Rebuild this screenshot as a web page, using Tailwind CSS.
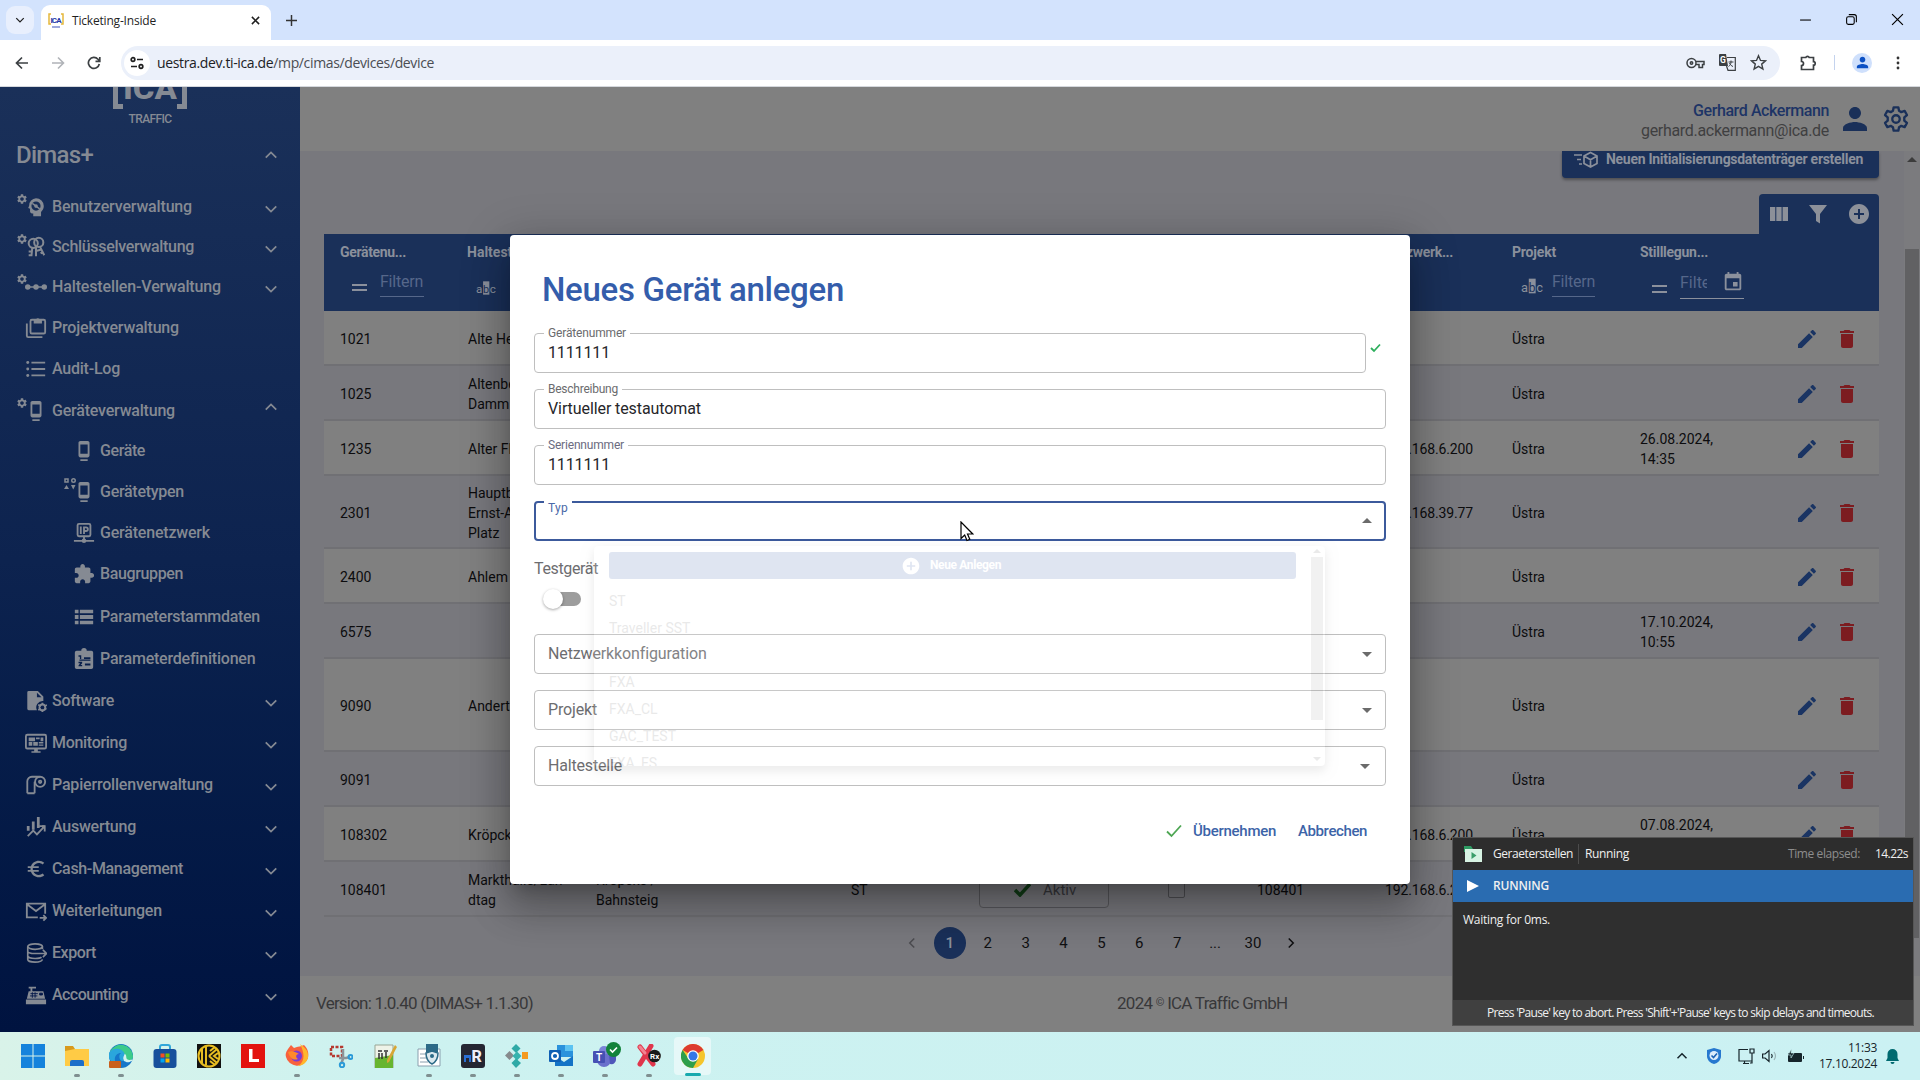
<!DOCTYPE html>
<html lang="de">
<head>
<meta charset="utf-8">
<title>Ticketing-Inside</title>
<script src="https://cdn.jsdelivr.net/npm/@tailwindcss/browser@4"></script>
</head>
<body class="relative h-[1080px] w-[1920px] overflow-hidden bg-[#808080] font-[Roboto,sans-serif]">
<svg class="hidden" xmlns="http://www.w3.org/2000/svg">
  <symbol id="gear" viewBox="0 0 24 24"><path d="M19.14 12.94c.04-.3.06-.61.06-.94 0-.32-.02-.64-.07-.94l2.03-1.58c.18-.14.23-.41.12-.61l-1.92-3.32c-.12-.22-.37-.29-.59-.22l-2.39.96c-.5-.38-1.03-.7-1.62-.94l-.36-2.54c-.04-.24-.24-.41-.48-.41h-3.84c-.24 0-.43.17-.47.41l-.36 2.54c-.59.24-1.13.57-1.62.94l-2.39-.96c-.22-.08-.47 0-.59.22L2.74 8.87c-.12.21-.08.47.12.61l2.03 1.58c-.05.3-.09.63-.09.94s.02.64.07.94l-2.03 1.58c-.18.14-.23.41-.12.61l1.92 3.32c.12.22.37.29.59.22l2.39-.96c.5.38 1.03.7 1.62.94l.36 2.54c.05.24.24.41.48.41h3.84c.24 0 .44-.17.47-.41l.36-2.54c.59-.24 1.13-.56 1.62-.94l2.39.96c.22.08.47 0 .59-.22l1.92-3.32c.12-.22.07-.47-.12-.61l-2.01-1.58zM12 15.6c-1.98 0-3.6-1.62-3.6-3.6s1.62-3.6 3.6-3.6 3.6 1.62 3.6 3.6-1.62 3.6-3.6 3.6z"/></symbol>
  <symbol id="edit" viewBox="0 0 24 24"><path d="M3 17.25V21h3.75L17.81 9.94l-3.75-3.75L3 17.25zM20.71 7.04c.39-.39.39-1.02 0-1.41l-2.34-2.34c-.39-.39-1.02-.39-1.41 0l-1.83 1.83 3.75 3.75 1.83-1.83z"/></symbol>
  <symbol id="delete" viewBox="0 0 24 24"><path d="M6 19c0 1.1.9 2 2 2h8c1.1 0 2-.9 2-2V7H6v12zM19 4h-3.5l-1-1h-5l-1 1H5v2h14V4z"/></symbol>
  <symbol id="extension" viewBox="0 0 24 24"><path d="M20.5 11H19V7c0-1.1-.9-2-2-2h-4V3.5C13 2.12 11.88 1 10.5 1S8 2.12 8 3.5V5H4c-1.1 0-1.99.9-1.99 2v3.8H3.5c1.49 0 2.7 1.21 2.7 2.7s-1.21 2.7-2.7 2.7H2V20c0 1.1.9 2 2 2h3.8v-1.5c0-1.49 1.21-2.7 2.7-2.7 1.49 0 2.7 1.21 2.7 2.7V22H17c1.1 0 2-.9 2-2v-4h1.5c1.38 0 2.5-1.12 2.5-2.5S21.88 11 20.5 11z"/></symbol>
  <symbol id="person" viewBox="0 0 24 24"><path d="M12 12c2.21 0 4-1.79 4-4s-1.79-4-4-4-4 1.79-4 4 1.79 4 4 4zm0 2c-2.67 0-8 1.34-8 4v2h16v-2c0-2.66-5.33-4-8-4z"/></symbol>
  <symbol id="add" viewBox="0 0 24 24"><path d="M12 2C6.48 2 2 6.48 2 12s4.48 10 10 10 10-4.48 10-10S17.52 2 12 2zm5 11h-4v4h-2v-4H7v-2h4V7h2v4h4v2z"/></symbol>
  <symbol id="euro" viewBox="0 0 24 24"><path d="M15 18.5c-2.51 0-4.68-1.42-5.76-3.5H15v-2H8.58c-.05-.33-.08-.66-.08-1s.03-.67.08-1H15V9H9.24C10.32 6.92 12.5 5.5 15 5.5c1.61 0 3.09.59 4.23 1.57L21 5.3C19.41 3.87 17.3 3 15 3c-3.92 0-7.24 2.51-8.48 6H3v2h3.06c-.04.33-.06.66-.06 1s.02.67.06 1H3v2h3.52c1.24 3.49 4.56 6 8.48 6 2.31 0 4.41-.87 6-2.3l-1.78-1.77c-1.13.98-2.6 1.57-4.22 1.57z"/></symbol>
  <symbol id="event" viewBox="0 0 24 24"><path d="M17 12h-5v5h5v-5zM16 1v2H8V1H6v2H5c-1.11 0-1.99.9-1.99 2L3 19c0 1.1.89 2 2 2h14c1.1 0 2-.9 2-2V5c0-1.1-.9-2-2-2h-1V1h-2zm3 18H5V8h14v11z"/></symbol>
  <symbol id="dock" viewBox="0 0 24 24"><path d="M8 23h8v-2H8v2zm8-21.99L8 1c-1.1 0-2 .9-2 2v14c0 1.1.9 2 2 2h8c1.1 0 2-.9 2-2V3c0-1.1-.9-1.99-2-1.99zM16 15H8V5h8v10z"/></symbol>
  <symbol id="user-head" viewBox="0 0 24 24"><path fill-rule="evenodd" d="M12 2.500a8.500 8.500 0 0 1 8.500 8.500c0 3-1.500 5-3 6.500V22H9v-3H7.500a2 2 0 0 1-2-2v-3L3.500 13l1-2.500A8 8 0 0 1 12 2.500zm0 3.500a5 5 0 1 0 0 10 5 5 0 0 0 0-10z"/><circle cx="12" cy="11" r="2"/><path d="M8 8l8 6" stroke="currentColor" stroke-width="1.500"/></symbol>
  <symbol id="keys" viewBox="0 0 24 24"><g fill="none" stroke="currentColor" stroke-width="2.200"><circle cx="9" cy="8" r="5"/><circle cx="15" cy="7" r="5"/><path d="M8 12l-1 10M4 17h4M4 21h4M12 11v11M16 11l5 10M13 16l4-1M20 17l-3 2"/></g></symbol>
  <symbol id="stops" viewBox="0 0 24 24"><circle cx="3" cy="12" r="3"/><circle cx="12" cy="12" r="3"/><circle cx="21" cy="12" r="3"/><path d="M3 11.200h18v1.600H3z"/></symbol>
  <symbol id="project" viewBox="0 0 24 24"><g fill="none" stroke="currentColor" stroke-width="2"><rect x="6" y="3" width="16" height="15" rx="1.500"/><path d="M2 7v13.500a1.500 1.500 0 0 0 1.500 1.500H19"/></g><path d="M9.500 3h2.200a2.400 2.400 0 0 1 4.600 0h2.200v4h-9z"/></symbol>
  <symbol id="list" viewBox="0 0 24 24"><circle cx="3" cy="5" r="1.600"/><circle cx="3" cy="12" r="1.600"/><circle cx="3" cy="19" r="1.600"/><path d="M7 4h15v2H7zM7 11h15v2H7zM7 18h15v2H7z"/></symbol>
  <symbol id="types" viewBox="0 0 24 24"><g fill="none" stroke="currentColor" stroke-width="3"><path d="M2 2h6v6H2z"/><circle cx="19" cy="5" r="3.500"/></g><path d="M5 14l5 8H0zM14 14h9l-4.500 9z"/></symbol>
  <symbol id="ip" viewBox="0 0 24 24"><g fill="none" stroke="currentColor" stroke-width="2"><rect x="5" y="2" width="14" height="13.500" rx="1.500"/><path d="M8.500 5v8M12 13V5.800h2.200a1.900 1.900 0 0 1 0 4H12M12 15v5M1 20.500h22"/></g><circle cx="12" cy="20.500" r="2.500"/></symbol>
  <symbol id="params" viewBox="0 0 24 24"><path d="M2 4h4v4H2zM7.500 4H22v4H7.500zM2 9.800h4v4.400H2zM7.500 9.800H22v4.400H7.500zM2 16h4v4H2zM7.500 16H22v4H7.500z"/></symbol>
  <symbol id="definitions" viewBox="0 0 24 24"><path fill-rule="evenodd" d="M4 3h5a3 3 0 0 1 6 0h5q2 0 2 2v16q0 2-2 2H4q-2 0-2-2V5q0-2 2-2zm2 5v1.500h1.500V13H9V8zm6 2v2h7v-2zM6 15v1.500h1.800L6 19v1h4v-1.500H8.300L10 16.500V15zm7 2v2h6v-2zM7 12.500V14h12v-1.500z"/></symbol>
  <symbol id="software" viewBox="0 0 24 24"><path d="M4 1h10l6 6v5a7 7 0 0 0-7 10H4a1.500 1.500 0 0 1-1.500-1.500v-18A1.500 1.500 0 0 1 4 1z"/><path d="M13 3v5h5z" fill="#0b2150"/><circle cx="19" cy="19" r="3.200" fill="none" stroke="currentColor" stroke-width="2"/><path d="M18 14h2v10h-2zM14 17l.8-1.600 9 4.800-.8 1.600zM14 21l9.500-5.500.8 1.500-9.500 5.500z"/><circle cx="19" cy="19" r="2" fill="#0a1f4d"/></symbol>
  <symbol id="monitoring" viewBox="0 0 24 24"><rect x="1" y="3" width="22" height="15" rx="1.500" fill="none" stroke="currentColor" stroke-width="2"/><path d="M4 6h7v4H4zM12 6h4v2h-4zM17 6h3v4h-3zM4 11h4v4H4zM9 11h5v4H9zM15 11h5v1.500h-5zM15 13.500h5V15h-5zM10 18h4v3h3v1.500H7V21h3z"/></symbol>
  <symbol id="paper" viewBox="0 0 24 24"><g fill="none" stroke="currentColor" stroke-width="2"><path d="M2.500 21V8a5 5 0 0 1 5-5H16M2.500 21h8M10.500 21V8.500"/><circle cx="16.500" cy="8.500" r="5.500"/><circle cx="16.500" cy="8.500" r="1.300"/></g></symbol>
  <symbol id="analytics" viewBox="0 0 24 24"><path d="M2 11h3v5H2zM7.500 6h3v9h-3zM13 1h3v12h-3zM18.500 10h3v3h-3z"/><path d="M3 22l6-6 4 4 8-8.500M15.500 11h6v6" fill="none" stroke="currentColor" stroke-width="2"/></symbol>
  <symbol id="forward" viewBox="0 0 24 24"><g fill="none" stroke="currentColor" stroke-width="2"><path d="M14 19H2V4h20v11M2.500 5L12 12l9.500-7M16 19.500h6.500M20 16.500l3 3-3 3"/></g></symbol>
  <symbol id="export" viewBox="0 0 24 24"><g fill="none" stroke="currentColor" stroke-width="1.800"><ellipse cx="11" cy="5" rx="8" ry="3"/><path d="M3 5v14c0 1.700 3.600 3 8 3 4 0 7.500-1 8-3M3 10c0 1.700 4 2.500 8 2.500h12M3 15c0 1.700 3.600 3 8 3 3 0 6-.5 7-1.500M19 5v3M19.500 8.500l4 4-4 4"/></g></symbol>
  <symbol id="register" viewBox="0 0 24 24"><path d="M1 17h22v5H1zM4 8h16l2 8H2zM6 4h2v4H6zM4 3h8v2H4z"/><path d="M6 10.500h8M5.500 13h8M8 9v6M11 9v6M16 10h3v2h-3z" stroke="#04184a" stroke-width="1" fill="#04184a"/></symbol>
  <symbol id="chev" viewBox="0 0 16 16"><path d="M2 5l6 6 6-6" fill="none" stroke="currentColor" stroke-width="2"/></symbol>
  <symbol id="abc" viewBox="0 0 24 24"><rect x="8.500" y="4" width="7.500" height="16" fill="currentColor"/><text x="0" y="18" font-size="14" font-family="Roboto" fill="currentColor">a</text><text x="8.500" y="18" font-size="13" font-family="Roboto" fill="#1a3059">b</text><text x="16.500" y="18" font-size="14" font-family="Roboto" fill="currentColor">c</text></symbol>
</svg>

<div class="flex h-full flex-col">
  <!-- Browser tab strip -->
  <header class="flex h-10 shrink-0 items-start bg-[#d3e3fd] font-['Open_Sans',sans-serif]">
    <div class="mt-[6px] ml-[6px] flex h-7 w-7 items-center justify-center rounded-[9px] bg-[#e8effd] text-[#1f1f1f]"><svg class="h-2.5 w-2.5"><use href="#chev"/></svg></div>
    <div class="mt-[5px] ml-[7px] flex h-[35px] w-[230px] items-center rounded-t-[9px] bg-white pr-[11px] pb-[4px] pl-[7px]">
      <svg class="h-4 w-4" viewBox="0 0 16 16"><path d="M3 1H1v10h2M13 1h2v10h-2" fill="none" stroke="#e5b83c" stroke-width="1.500"/><text x="2.500" y="9.500" font-size="8" font-weight="700" textLength="11" fill="#2638a8" font-family="Roboto">ICA</text><path d="M4 14h8" stroke="#7d8bd0" stroke-width="1.500"/></svg>
      <span class="ml-2 text-[12px] text-[#1f1f1f]" data-w="84">Ticketing-Inside</span>
      <svg class="ml-auto h-[9px] w-[9px]" viewBox="0 0 10 10"><path d="M1 1l8 8M9 1L1 9" stroke="#1f1f1f" stroke-width="1.700"/></svg>
    </div>
    <svg class="mt-[15px] ml-[15px] h-[11px] w-[11px]" viewBox="0 0 12 12"><path d="M6 0v12M0 6h12" stroke="#333" stroke-width="1.600"/></svg>
    <div class="mt-[13px] mr-[16px] ml-auto flex items-center gap-[33px] text-black">
      <svg class="h-[13px] w-[13px]" viewBox="0 0 12 12"><path d="M1 6.500h10" stroke="currentColor"/></svg>
      <svg class="h-[13px] w-[13px]" viewBox="0 0 12 12" fill="none" stroke="currentColor"><rect x="1.500" y="3.500" width="7" height="7" rx="1.500"/><path d="M3.500 1.500h5a2 2 0 0 1 2 2v5"/></svg>
      <svg class="h-[13px] w-[13px]" viewBox="0 0 12 12"><path d="M1 1l10 10M11 1L1 11" stroke="currentColor" stroke-width="1.100"/></svg>
    </div>
  </header>
  <!-- Address bar -->
  <div class="flex h-[47px] shrink-0 items-center border-b border-[#d5d8dd] bg-white pb-px font-['Open_Sans',sans-serif] text-[#3c4043]">
    <div class="flex w-[121px] items-center gap-[22px] pl-[15px]">
      <svg class="h-[14px] w-[14px]" viewBox="0 0 14 14" fill="none" stroke="currentColor" stroke-width="1.700"><path d="M13 7H1.500M7 1.500L1.500 7 7 12.500"/></svg>
      <svg class="h-[14px] w-[14px] text-[#b0b3b8]" viewBox="0 0 14 14" fill="none" stroke="currentColor" stroke-width="1.600"><path d="M1 7h11.500M7 1.500L12.500 7 7 12.500"/></svg>
      <svg class="h-[14px] w-[14px]" viewBox="0 0 14 14" fill="none" stroke="currentColor" stroke-width="1.700"><path d="M12.300 8A5.500 5.500 0 1 1 11 3.200L12.600 5M12.800 1v4.300H8.500"/></svg>
    </div>
    <div class="flex h-[34px] w-[1659px] items-center rounded-full bg-[#ebf0fa] pr-[13px] pl-1">
      <div class="-ml-px flex h-[26px] w-[26px] items-center justify-center rounded-full bg-white"><svg class="h-[14px] w-[14px]" viewBox="0 0 14 14" fill="none" stroke="#1f1f1f" stroke-width="1.700"><circle cx="3" cy="3.500" r="1.800"/><path d="M7 3.500h6M1 10.500h6"/><circle cx="11" cy="10.500" r="1.800"/></svg></div>
      <span class="ml-[7px] text-[14px] text-[#4a4d52]" data-w="277"><span class="text-[#202124]">uestra.dev.ti-ica.de</span>/mp/cimas/devices/device</span>
      <div class="ml-auto flex items-center gap-[14px]">
        <svg class="h-[12px] w-[19px]" viewBox="0 0 19 12" fill="none" stroke="currentColor" stroke-width="1.500"><circle cx="5.500" cy="6" r="4.500"/><circle cx="5.500" cy="6" r="1.200"/><path d="M10 4.500h8v3h-1.500v3H13v-3h-3"/></svg>
        <svg class="h-[17px] w-[17px]" viewBox="0 0 17 17"><path d="M1 0h6l2 12H1a1 1 0 0 1-1-1V1a1 1 0 0 1 1-1z" fill="currentColor"/><path d="M8 3.500h8.300v12.800H9L7.500 12" fill="none" stroke="currentColor" stroke-width="1.200"/><text x="1" y="9" font-size="8.500" font-weight="700" fill="#fff" font-family="Roboto">G</text><path d="M9.500 8h5M12 6.500V8c0 2-1 3.500-2.500 4.500M10.500 9c.5 1.500 2 3 3.500 3.500" stroke="currentColor" fill="none"/></svg>
        <svg class="h-[17px] w-[17px]" viewBox="0 0 17 17"><path d="M8.500 1.700l2 4.700 5 .4-3.800 3.300 1.200 5-4.400-2.700-4.400 2.700 1.200-5L1.500 6.800l5-.4z" fill="none" stroke="currentColor" stroke-width="1.400"/></svg>
      </div>
    </div>
    <svg class="ml-5 h-[17px] w-[17px]" viewBox="0 0 17 17" fill="none" stroke="currentColor" stroke-width="1.700"><path d="M1.500 3.500h4.300a1.800 1.800 0 0 1 3.400 0h4.300v4.200a1.700 1.700 0 0 1 0 3.400v4.400h-12v-4a2 2 0 0 0 0-4z"/></svg>
    <div class="ml-[17px] h-[15px] w-px bg-[#c4d3ee]"></div>
    <div class="ml-[17px] flex h-5 w-5 items-center justify-center rounded-full bg-[#cfe0fc] text-[#0b50c4]"><svg class="h-[17px] w-[17px] fill-current"><use href="#person"/></svg></div>
    <svg class="ml-[24px] h-[14px] w-[4px]" viewBox="0 0 4 14" fill="#333"><circle cx="2" cy="2" r="1.400"/><circle cx="2" cy="7" r="1.400"/><circle cx="2" cy="12" r="1.400"/></svg>
  </div>

  <main class="flex h-[945px] shrink-0">
    <!-- Navigation -->
    <aside class="flex w-[300px] shrink-0 flex-col overflow-hidden bg-linear-to-b from-[#1a3059] via-[#0d234f] to-[#001340] text-[#858a93]">
      <div class="flex h-[44px] shrink-0 flex-col items-center overflow-hidden">
        <svg class="h-[22px] w-[74px]" viewBox="0 0 74 22" fill="currentColor"><path d="M0 0h5v17h5v5H0zM74 0h-5v17h-5v5h10z"/><text x="10" y="12" font-family="Roboto" font-weight="800" font-size="32" textLength="54" lengthAdjust="spacingAndGlyphs">ICA</text></svg>
        <span class="mt-[3px] text-[12px] leading-[14px] font-medium" data-w="43">TRAFFIC</span>
      </div>
      <div class="flex h-12 shrink-0 items-center pr-[22px] pl-4"><span class="text-[24px] leading-none font-medium" data-w="77">Dimas+</span><svg class="ml-auto h-[14px] w-[14px] rotate-180"><use href="#chev"/></svg></div>
      <nav id="nav" class="mt-2 flex flex-col"></nav>
    </aside>

    <section class="flex grow flex-col">
      <div class="flex h-16 shrink-0 items-center justify-end bg-[#808080] pr-[10px]">
        <div class="flex flex-col items-end pt-1 text-[16px] leading-5"><span class="font-medium text-[#1d3466]" data-w="136">Gerhard Ackermann</span><span class="text-[#3f3f40]" data-w="188">gerhard.ackermann@ica.de</span></div>
        <svg class="ml-[8px] h-9 w-9 fill-[#1a3059]"><use href="#person"/></svg>
        <svg class="ml-[9px] h-7 w-7 text-[#1a3059]" viewBox="0 0 24 24" fill="none" stroke="currentColor" stroke-width="2" stroke-linejoin="round"><path d="M10 2h4l.6 3 1.900 1.100 2.900-1 2 3.500-2.300 2v2.800l2.300 2-2 3.500-2.900-1-1.900 1.100-.6 3h-4l-.6-3-1.900-1.100-2.900 1-2-3.500 2.300-2v-2.800l-2.300-2 2-3.500 2.900 1L9.400 5z"/><circle cx="12" cy="12" r="3.200"/></svg>
      </div>
      <div class="flex grow">
        <div class="flex w-[1604px] flex-col bg-[#78787d]">
          <div class="flex flex-col items-end pr-[25px]">
            <div class="flex h-[27px] w-[317px] items-start rounded-b-[4px] bg-[#1a3059] pl-3 text-[#8b909c] shadow-[0_2px_3px_rgba(0,0,0,0.35)]">
              <svg class="h-[18px] w-6" viewBox="0 0 24 18" fill="none" stroke="currentColor" stroke-width="1.700"><path d="M0 4h8M3 8.500h4M5 13h3M16.500 1.500l6.500 3.500v7.500l-6.500 3.500-6.500-3.500V5zM10 5l6.500 3.700L23 5M16.500 8.700v7"/></svg>
              <span class="ml-2 text-[14px] leading-[17px] font-bold" data-w="257">Neuen Initialisierungsdatenträger erstellen</span>
            </div>
            <div class="mt-4 flex h-10 w-[120px] items-center justify-between rounded-t-[4px] bg-[#1a3059] pr-[8px] pl-[10px] text-[#8c9099]">
              <svg class="h-4 w-5 fill-current" viewBox="0 0 20 16"><path d="M1 1h5.300v14H1zM7.300 1h5.300v14H7.300zM13.600 1H19v14h-5.400z"/></svg>
              <svg class="h-[19px] w-[18px] fill-current" viewBox="0 0 18 19"><path d="M0 0h18l-7 9v9.500l-4-2.500V9z"/></svg>
              <svg class="h-6 w-6 fill-current"><use href="#add"/></svg>
            </div>
          </div>
          <div class="relative ml-6 flex h-[77px] w-[1555px] shrink-0 bg-[#1a3059] pt-[9px] pl-4 text-[#8b909c]">
            <div class="flex w-[127px] shrink-0 flex-col items-start"><b class="text-[14px] leading-[18px]" data-w="66">Gerätenu...</b><div class="mt-[12px] flex items-end"><svg class="mb-[3px] ml-3 h-3 w-[15px]" viewBox="0 0 15 12"><path d="M0 3h15M0 8h15" stroke="currentColor" stroke-width="2"/></svg><span class="ml-[13px] w-[44px] border-b border-current pb-[5px] text-[16px] leading-[18px] text-[#56678a]"><span data-w="43">Filtern</span></span></div></div>
            <div class="flex w-[918px] shrink-0 flex-col items-start"><b class="text-[14px] leading-[18px]">Haltestelle</b><svg class="mt-[17px] ml-[9px] h-5 w-5"><use href="#abc"/></svg></div>
            <div class="flex w-[127px] shrink-0 flex-col items-start"><b class="w-[68px] text-[14px] leading-[18px]" data-w="68">Netzwerk...</b></div>
            <div class="flex w-[128px] shrink-0 flex-col items-start"><b class="text-[14px] leading-[18px]" data-w="44">Projekt</b><div class="mt-[12px] flex items-end"><svg class="ml-[9px] h-[22px] w-[22px]"><use href="#abc"/></svg><span class="ml-[9px] w-[43px] border-b border-current pb-[5px] text-[16px] leading-[18px] text-[#56678a]"><span data-w="43">Filtern</span></span></div></div>
            <div class="flex shrink-0 flex-col items-start"><b class="text-[14px] leading-[18px]" data-w="68">Stilllegun...</b><div class="mt-[9px] flex items-end"><svg class="mb-[3px] ml-3 h-3 w-[15px]" viewBox="0 0 15 12"><path d="M0 2h15M0 8h15" stroke="currentColor" stroke-width="2"/></svg><div class="ml-[13px] flex w-16 items-end justify-between border-b border-current pb-[4px]"><span class="w-[27px] overflow-hidden text-[16px] leading-[22px] text-[#56678a]">Filte</span><svg class="h-6 w-[22px] fill-current"><use href="#event"/></svg></div></div></div>
          </div>
          <div id="rows" class="ml-6 w-[1555px]"></div>
          <div class="flex h-[52px] items-center pl-[593px] text-[15px] text-[#101012]">
            <div class="grid grid-cols-[repeat(11,37.9px)] items-center text-center">
              <svg class="mx-auto h-3 w-3 rotate-90 text-[#4c4c50]"><use href="#chev"/></svg>
              <span class="mx-auto flex h-8 w-8 items-center justify-center rounded-full bg-[#1a3059] font-medium text-[#8b909c]">1</span>
              <span>2</span><span>3</span><span>4</span><span>5</span><span>6</span><span>7</span><span>...</span><span>30</span>
              <svg class="mx-auto h-3 w-3 -rotate-90"><use href="#chev"/></svg>
            </div>
          </div>
        </div>
        <div class="flex w-4 flex-col items-center bg-[#7b7b7e]">
          <div class="mt-[6px] h-0 w-0 border-x-[5px] border-b-[5px] border-x-transparent border-b-[#3c3c3c]"></div>
          <div class="mt-[87px] h-[689px] w-[14px] bg-[#616163]"></div>
        </div>
      </div>
      <footer class="flex h-14 shrink-0 items-center bg-[#808080] pl-4 text-[17px] text-[#38383a]"><span data-w="217">Version: 1.0.40 (DIMAS+ 1.1.30)</span><span class="ml-[584px]" data-w="169">2024 <span class="relative -top-[3px] text-[11px]">©</span> ICA Traffic GmbH</span></footer>
    </section>
  </main>

  <!-- Taskbar -->
  <div class="flex h-12 shrink-0 items-center bg-linear-to-r from-[#d9f3e9] via-[#cdf2f0] via-20% to-[#cbf1f3] font-['Open_Sans',sans-serif]">
    <div class="flex items-center pl-[11px]">
      <div class="flex h-12 w-11 items-center justify-center"><svg class="h-6 w-6" viewBox="0 0 24 24" fill="#1583dc"><path d="M0 0h11.500v11.500H0zM12.500 0H24v11.500H12.500zM0 12.500h11.500V24H0zM12.500 12.500H24V24H12.500z"/></svg></div>
      <div class="relative flex h-12 w-11 items-center justify-center"><svg class="h-6 w-6" viewBox="0 0 24 24"><path d="M0 2h8l2 3h13v16H0z" fill="#d89a1c"/><path d="M0 7l10-2h14v17H0z" fill="#ffcb45"/><path d="M5 22v-4q0-2 2-2h10q2 0 2 2v4z" fill="#1b6fc9"/></svg><i class="absolute bottom-[3px] h-[3px] w-[6px] rounded bg-[#7f8f90]"></i></div>
      <div class="relative flex h-12 w-11 items-center justify-center"><svg class="h-6 w-6" viewBox="0 0 24 24"><circle cx="12" cy="12" r="12" fill="#1676c9"/><path d="M1 8a12 12 0 0 1 23 4c0 4-3 6-7 5-3-1-1-3-1-5 0-4-8-6-15-4z" fill="#3ccb8a"/><path d="M0 9C4 2 16 4 16 12c0 2-2 3-1 5-5 1-6-6-3-8-5 0-8 5-5 11C0 18-1 12 0 9z" fill="#2aa6dc"/><path d="M16 11c-1 2-2 5 1 6 2 1 5 0 6-1-1 1-5 1-6-1s0-3-1-4z" fill="#d4f2ee" stroke="#d4f2ee" stroke-width="1.500"/><rect x="0" y="17" width="12" height="7" rx="1" fill="#c9601c"/></svg><i class="absolute bottom-[3px] h-[3px] w-[6px] rounded bg-[#7f8f90]"></i></div>
      <div class="flex h-12 w-11 items-center justify-center"><svg class="h-6 w-6" viewBox="0 0 24 24"><path d="M7 6V3q0-2 2-2h6q2 0 2 2v3" fill="none" stroke="#30a7d9" stroke-width="2"/><rect x="0.500" y="5" width="23" height="19" rx="3" fill="#17509c"/><path d="M7.500 9.500h4v4h-4z" fill="#f25022"/><path d="M12.500 9.500h4v4h-4z" fill="#7fba00"/><path d="M7.500 14.500h4v4h-4z" fill="#00a4ef"/><path d="M12.500 14.500h4v4h-4z" fill="#ffb900"/></svg></div>
      <div class="flex h-12 w-11 items-center justify-center"><svg class="h-6 w-6" viewBox="0 0 24 24"><rect width="24" height="24" fill="#111"/><g fill="none" stroke="#e7bd22" stroke-width="2"><circle cx="12" cy="12" r="10.500"/><path d="M5 5v14M9 3v18M12 12l8-7M12 12l8 7M13 7l5-4M13 17l5 4M21 9l-4 3 4 3"/></g></svg></div>
      <div class="flex h-12 w-11 items-center justify-center"><svg class="h-6 w-6" viewBox="0 0 24 24"><rect width="24" height="24" fill="#e3130f"/><path d="M8 5h3.500v10H18v3H8z" fill="#fff"/></svg></div>
      <div class="relative flex h-12 w-11 items-center justify-center"><svg class="h-6 w-6" viewBox="0 0 24 24"><path d="M3 5l3-4 3 3c6-2 9-2 10-3 4 4 5 8 4 13a11.500 11.500 0 0 1-22-1C0 9 2 7 3 5z" fill="#f8613d"/><path d="M15 0c4 3 9 6 8 14-2 6-7 8-10 8 8-5 6-14 2-22z" fill="#ffb72b"/><circle cx="11.500" cy="12" r="5.500" fill="#7a3bd3"/><path d="M3 8c4-2 8 0 11 2-3 0-4 3-1 5-5 2-8-1-10-7z" fill="#ff8a2a"/></svg><i class="absolute bottom-[3px] h-[3px] w-[6px] rounded bg-[#7f8f90]"></i></div>
      <div class="flex h-12 w-11 items-center justify-center"><svg class="h-6 w-6" viewBox="0 0 24 24" fill="none"><path d="M2 3h11v9H2z" stroke="#b6392f" stroke-width="2.500" stroke-dasharray="3 1.500"/><path d="M14 5v10l-2 5M10 14h7l4-1" stroke="#8c9398" stroke-width="2.500"/><circle cx="13" cy="21" r="2.200" stroke="#2b9bd8" stroke-width="2"/><circle cx="21.500" cy="13" r="2" stroke="#2b9bd8" stroke-width="2"/></svg></div>
      <div class="flex h-12 w-11 items-center justify-center"><svg class="h-6 w-6" viewBox="0 0 24 24"><path d="M2 1h18v23H2z" fill="#eef3e8" stroke="#98a695"/><path d="M2 14l18-3v13H2z" fill="#67b52f"/><path d="M5 7h4M11 7h4M6 9v6M9 9v6M13 8v6" stroke="#333" stroke-width="1.500"/><path d="M22 1l2 2-8 15-2 1v-3z" fill="#d8a636"/></svg></div>
      <div class="relative flex h-12 w-11 items-center justify-center"><svg class="h-6 w-6" viewBox="0 0 24 24"><path d="M1 5h22v17H1z" fill="#fff" stroke="#8a9fae"/><path d="M3 10h8M3 14h8M3 18h8" stroke="#8a9fae"/><path d="M9 0h12v8l-6 4-6-4z" fill="#2c6a87"/><path d="M9 9l6-2 6 2c0 6-2 9-6 11-4-2-6-5-6-11z" fill="#dce9ef" stroke="#2c6a87" stroke-width="1.500"/><circle cx="15" cy="12" r="2" fill="#2c6a87"/></svg><i class="absolute bottom-[3px] h-[3px] w-[6px] rounded bg-[#7f8f90]"></i></div>
      <div class="relative flex h-12 w-11 items-center justify-center"><svg class="h-6 w-6" viewBox="0 0 24 24"><rect width="24" height="24" rx="3" fill="#242632"/><path d="M3 11h7v7H8v-4H5v4H3z" fill="#2a6fd3"/><text x="10.500" y="18" font-size="16" font-weight="800" font-family="Roboto" fill="#f0eef8">R</text></svg><i class="absolute bottom-[3px] h-[3px] w-[6px] rounded bg-[#7f8f90]"></i></div>
      <div class="relative flex h-12 w-11 items-center justify-center"><svg class="h-6 w-6" viewBox="0 0 24 24"><path d="M11 0l4.500 4.500L11 9 6.500 4.500z" fill="#2fa9a6"/><path d="M4.500 7L9 11.500 4.500 16 0 11.500z" fill="#868a8c"/><path d="M12 7.500l4.500 4.500-4.500 4.500L7.500 12z" fill="#35b3ae"/><path d="M11 14.500l5 4.500-5 5-4.500-5z" fill="#2fa9a6"/><path d="M17 8h6v7h-6z" fill="#f39a20"/></svg><i class="absolute bottom-[3px] h-[3px] w-[6px] rounded bg-[#7f8f90]"></i></div>
      <div class="relative flex h-12 w-11 items-center justify-center"><svg class="h-6 w-6" viewBox="0 0 24 24"><path d="M8 1h16v12H8z" fill="#2a92dc"/><path d="M16 1h8v6h-8z" fill="#5cc3f2"/><path d="M6 12l9 6 9-6v10H6z" fill="#1473c6"/><rect x="0" y="6" width="12" height="12" rx="1" fill="#0f5fb4"/><circle cx="6" cy="12" r="3" fill="none" stroke="#fff" stroke-width="1.800"/></svg><i class="absolute bottom-[3px] h-[3px] w-[6px] rounded bg-[#7f8f90]"></i></div>
      <div class="relative flex h-12 w-11 items-center justify-center"><svg class="h-7 w-8" viewBox="0 0 32 28"><circle cx="15" cy="9" r="5" fill="#7b83d8"/><path d="M8 12h14v6a7 7 0 0 1-14 0z" fill="#6a70cc"/><path d="M20 13h7v5q-1 5-6 4z" fill="#4f57ba"/><rect x="4" y="9" width="12" height="12" rx="1" fill="#4650b4"/><text x="7" y="18.500" font-size="10" font-weight="700" font-family="Roboto" fill="#fff">T</text><circle cx="24.500" cy="7.500" r="7.500" fill="#12833a"/><path d="M21 7.500l2.500 2.500 4.500-4.500" fill="none" stroke="#fff" stroke-width="1.700"/></svg><i class="absolute bottom-[3px] h-[3px] w-[6px] rounded bg-[#7f8f90]"></i></div>
      <div class="relative flex h-12 w-11 items-center justify-center"><svg class="h-6 w-6" viewBox="0 0 24 24"><path d="M3 3l13 17M14 2L3 20" stroke="#e0364c" stroke-width="5" stroke-linecap="round"/><path d="M3 3l5 6" stroke="#f28391" stroke-width="3" stroke-linecap="round"/><circle cx="17.500" cy="12" r="6.300" fill="#191919"/><text x="13" y="15" font-size="8" font-weight="700" fill="#fff" font-family="Roboto">Rx</text></svg><i class="absolute bottom-[3px] h-[3px] w-[6px] rounded bg-[#7f8f90]"></i></div>
      <div class="relative ml-[3px] flex h-[38px] w-[37px] items-center justify-center rounded bg-[#e6f8f8]"><svg class="h-6 w-6" viewBox="0 0 24 24"><circle cx="12" cy="12" r="12" fill="#f5c52d"/><path d="M1.600 6A12 12 0 0 0 12 24l5-9-10-1z" fill="#2e9e4b"/><path d="M12 12L1.600 6A12 12 0 0 1 22.400 6z" fill="#dd3b30"/><circle cx="12" cy="12" r="5.800" fill="#fff"/><circle cx="12" cy="12" r="4.500" fill="#3477e8"/></svg><i class="absolute -bottom-px h-[3px] w-4 rounded bg-[#18a9ae]"></i></div>
    </div>
    <div class="mr-[21px] ml-auto flex items-center text-[#16252b]">
      <svg class="h-3 w-3 rotate-180"><use href="#chev"/></svg>
      <svg class="ml-[19px] h-4 w-[14px]" viewBox="0 0 14 16"><path d="M7 0l7 2v6c0 4-3 7-7 8-4-1-7-4-7-8V2z" fill="#2678cf"/><circle cx="7" cy="7.500" r="4.500" fill="#dcebfb"/><path d="M4.500 7.500l2 2 3.500-4" fill="none" stroke="#1b62b5" stroke-width="1.600"/></svg>
      <svg class="ml-[17px] h-[17px] w-[17px]" viewBox="0 0 17 17" fill="none" stroke="currentColor" stroke-width="1.200"><path d="M10 1.500H1v11.500h13M14 8v7h-2M5 15.500h6M6.500 13v2.500M12 1h4v4h-4zM14 5v4"/></svg>
      <svg class="ml-[7px] h-[14px] w-[15px]" viewBox="0 0 15 14" fill="none" stroke="currentColor" stroke-width="1.200"><path d="M.6 5v4h2.500L7 12.500v-11L3.100 5zM9.500 5q1.500 2 0 4"/><path d="M12 3q3 4 0 8" stroke="#9bb5b8"/></svg>
      <svg class="ml-[11px] h-[14px] w-[16px]" viewBox="0 0 16 14"><path d="M1 5h12v7H1z" fill="currentColor" stroke="currentColor" stroke-linejoin="round" stroke-width="2"/><path d="M15 7h1v3h-1z" fill="currentColor"/><path d="M3.500 0L0 6h3v3l3-5H3z" fill="currentColor" stroke="#cbf1f3" stroke-width=".6"/></svg>
      <div class="ml-[14px] flex w-[59px] flex-col items-end text-[12px] leading-4"><span data-w="29">11:33</span><span data-w="58">17.10.2024</span></div>
      <svg class="ml-[9px] h-[15px] w-[13px]" viewBox="0 0 13 15" fill="#006a70"><path d="M6.500 0A5 5 0 0 1 11.500 5v4l1.500 3H0l1.500-3V5a5 5 0 0 1 5-5zM4.500 13h4a2 2 0 0 1-4 0z"/></svg>
    </div>
  </div>
</div>

<!-- New device dialog -->
<div class="absolute top-[235px] left-[510px] flex h-[649px] w-[900px] flex-col rounded-[4px] bg-white px-6 shadow-[0_11px_15px_-7px_rgba(0,0,0,0.2),0_24px_38px_3px_rgba(0,0,0,0.2),0_9px_46px_8px_rgba(0,0,0,0.16)]">
  <h2 class="mt-[35px] ml-[8px] self-start text-[33px] leading-[40px] font-medium whitespace-nowrap text-[#345dab]" data-w="302">Neues Gerät anlegen</h2>
  <div class="mt-[23px] flex flex-col gap-4 text-[16px] text-[#26262a]">
    <div class="flex">
      <div class="relative flex h-10 w-[832px] items-center rounded-[4px] border border-[#bfbfbf] px-[13px]"><span class="absolute -top-[9px] left-[9px] bg-white px-1 text-[12px] leading-4 text-[#6b6b6e]"><span data-w="78">Gerätenummer</span></span><span data-w="62">1111111</span></div>
      <svg class="mt-2 ml-[4px] h-[14px] w-[11px]" viewBox="0 0 11 14"><path d="M1 7l3 3 6-6.500" fill="none" stroke="#2eaf5d" stroke-width="1.800"/></svg>
    </div>
    <div class="relative flex h-10 items-center rounded-[4px] border border-[#bfbfbf] px-[13px]"><span class="absolute -top-[9px] left-[9px] bg-white px-1 text-[12px] leading-4 text-[#6b6b6e]"><span data-w="70">Beschreibung</span></span><span data-w="153">Virtueller testautomat</span></div>
    <div class="relative flex h-10 items-center rounded-[4px] border border-[#bfbfbf] px-[13px]"><span class="absolute -top-[9px] left-[9px] bg-white px-1 text-[12px] leading-4 text-[#6b6b80]"><span data-w="76">Seriennummer</span></span><span data-w="62">1111111</span></div>
    <div class="relative flex h-10 items-center rounded-[4px] border-2 border-[#3c5a9c] pr-[12px]"><span class="absolute -top-[3px] left-[8px] bg-white px-1 text-[12px] leading-4 text-[#4a69a8]"><span data-w="20">Typ</span></span><i class="mb-[2px] ml-auto border-x-[5px] border-b-[5px] border-x-transparent border-b-[#6b6b6b]"></i></div>
  </div>
  <span class="mt-[18px] self-start text-[16px] leading-5 text-[#6d6d70]" data-w="64">Testgerät</span>
  <div class="mt-[10px] ml-[9px] flex items-center"><div class="relative z-10 h-5 w-5 rounded-full bg-white shadow-[0_1px_3px_rgba(0,0,0,0.35)]"></div><div class="-ml-4 h-[14px] w-[34px] rounded-full bg-[#9d9d9d]"></div></div>
  <div class="mt-[25px] flex flex-col gap-4 text-[16px] text-[#6d6d70]">
    <div class="flex h-10 items-center justify-between rounded-[4px] border border-[#bfbfbf] pr-[13px] pl-[13px]"><span data-w="158">Netzwerkkonfiguration</span><i class="border-x-[5px] border-t-[5px] border-x-transparent border-t-[#6b6b6b]"></i></div>
    <div class="flex h-10 items-center justify-between rounded-[4px] border border-[#bfbfbf] pr-[13px] pl-[13px]"><span data-w="49">Projekt</span><i class="border-x-[5px] border-t-[5px] border-x-transparent border-t-[#6b6b6b]"></i></div>
    <div class="flex h-10 items-center justify-between rounded-[4px] border border-[#bfbfbf] pr-[15px] pl-[13px]"><span data-w="74">Haltestelle</span><i class="border-x-[5px] border-t-[5px] border-x-transparent border-t-[#6b6b6b]"></i></div>
  </div>
  <div class="mt-[35px] flex items-center justify-end pr-[19px] text-[15px] leading-5 font-medium text-[#3c64a8]">
    <svg class="mr-[11px] h-[14px] w-4" viewBox="0 0 16 14"><path d="M1 7.500L5.500 12 15 1.500" fill="none" stroke="#4da653" stroke-width="1.800"/></svg>
    <span data-w="83">Übernehmen</span><span class="ml-[22px]" data-w="69">Abbrechen</span>
  </div>
</div>

<!-- Type list fading in below its field -->
<div class="absolute top-[546px] left-[594px] flex h-[220px] w-[731px] overflow-hidden rounded bg-white opacity-[.15] shadow-[0_5px_8px_rgba(0,0,0,0.35),0_3px_14px_rgba(0,0,0,0.25)]">
  <div class="ml-[15px] flex w-[687px] flex-col text-[14px] leading-[27px] text-[#707070]">
    <div class="mt-[6px] mb-[9px] flex h-[27px] shrink-0 items-center justify-center gap-[9px] rounded-[3px] bg-[#2f57a8] pr-[3px] text-[12px] font-bold text-white"><svg class="h-5 w-5 fill-current"><use href="#add"/></svg><span data-w="71">Neue Anlegen</span></div>
    <span>ST</span><span>Traveller SST</span><span>&nbsp;</span><span>FXA</span><span>FXA_CL</span><span>GAC_TEST</span><span>FXA_FS</span>
  </div>
  <div class="mt-[3px] ml-[15px] flex flex-col items-center"><i class="border-x-4 border-b-4 border-x-transparent border-b-[#777]"></i><div class="mt-[4px] h-[163px] w-[12px] bg-[#a5a5a5]"></div><i class="mt-auto mb-[5px] border-x-4 border-t-4 border-x-transparent border-t-[#777]"></i></div>
</div>

<!-- Automation runner -->
<div class="absolute top-[837px] left-[1452px] flex h-[189px] w-[462px] flex-col border border-[#565656] bg-[#2f2f2f] font-['Open_Sans',sans-serif] text-[12px] text-[#f0f0f0]">
  <div class="flex h-8 shrink-0 items-center bg-[#2d2d2d] pr-[5px] pl-[11px]">
    <svg class="h-[18px] w-[18px]" viewBox="0 0 18 18"><path d="M0 1h7l2 3h9v3H0z" fill="#2e9b63"/><path d="M1 4h17v13H1z" fill="#d7f3e3"/><path d="M7.500 7v7l5-3.500z" fill="#3a9d69"/></svg>
    <span class="ml-[11px]" data-w="80">Geraeterstellen</span><i class="ml-[5px] h-5 w-px bg-[#4c4c4c]"></i><span class="ml-[6px]" data-w="44">Running</span>
    <span class="ml-auto text-[#8d8d8d]" data-w="72">Time elapsed:</span><span class="ml-[15px]" data-w="33">14.22s</span>
  </div>
  <div class="flex h-8 shrink-0 items-center bg-[#2a6cb1] pl-[14px] font-semibold"><svg class="h-3 w-3" viewBox="0 0 12 12"><path d="M0 0v12l12-6z" fill="#fff"/></svg><span class="ml-[14px]" data-w="56">RUNNING</span></div>
  <span class="mt-[8px] ml-[10px] self-start leading-5" data-w="87">Waiting for 0ms.</span>
  <div class="mt-auto flex h-[25px] items-center bg-[#404040] pl-[34px]"><span data-w="387">Press 'Pause' key to abort. Press 'Shift'+'Pause' keys to skip delays and timeouts.</span></div>
</div>

<svg class="absolute top-[521px] left-[960px] h-[21px] w-[14px]" viewBox="0 0 14 21"><path d="M1 1v16.500l3.700-3.500 2.300 5.500 2.800-1.200-2.300-5.300H12.800z" fill="#fff" stroke="#000" stroke-width="1.200"/></svg>

<script>
  const nav = [
    ['Benutzerverwaltung', 'user-head', 40, 140, 'down', 'gear'], ['Schlüsselverwaltung', 'keys', 40, 142, 'down', 'gear'],
    ['Haltestellen-Verwaltung', 'stops', 40, 169, 'down', 'gear'], ['Projektverwaltung', 'project', 41, 127], ['Audit-Log', 'list', 42, 68],
    ['Geräteverwaltung', 'dock', 42, 123, 'up', 'gear'],
    ['Geräte', 'dock', 38, 45, 'sub'], ['Gerätetypen', 'dock', 44, 84, 'sub', 'types'], ['Gerätenetzwerk', 'ip', 38, 110, 'sub'],
    ['Baugruppen', 'extension', 44, 83, 'sub'], ['Parameterstammdaten', 'params', 42, 160, 'sub'], ['Parameterdefinitionen', 'definitions', 42, 155, 'sub'],
    ['Software', 'software', 42, 62, 'down'], ['Monitoring', 'monitoring', 42, 75, 'down'], ['Papierrollenverwaltung', 'paper', 42, 161, 'down'],
    ['Auswertung', 'analytics', 42, 84, 'down'], ['Cash-Management', 'euro', 42, 131, 'down'], ['Weiterleitungen', 'forward', 42, 110, 'down'],
    ['Export', 'export', 42, 44, 'down'], ['Accounting', 'register', 42, 76, 'down']
  ];
  document.getElementById('nav').innerHTML = nav.map(([label, icon, h, w, kind, badge]) => `
    <div class="flex shrink-0 items-center pr-[22px] ${kind === 'sub' ? 'pl-[64px]' : 'pl-4'}" style="height:${h}px">
      <svg class="mb-4 h-[12px] w-[12px] shrink-0 fill-current">${badge ? `<use href="#${badge}"/>` : ''}</svg>
      <svg class="-ml-[3px] h-[22px] w-[22px] shrink-0 fill-current"><use href="#${icon}"/></svg>
      <span class="ml-[5px] text-[16px] leading-5 font-medium" data-w="${w}">${label}</span>
      ${kind === 'down' ? '<svg class="mt-1 ml-auto h-[14px] w-[14px] shrink-0"><use href="#chev"/></svg>' : kind === 'up' ? '<svg class="mb-2 ml-auto h-[14px] w-[14px] shrink-0 rotate-180"><use href="#chev"/></svg>' : ''}
    </div>`).join('');

  const rows = [
    [55, '1021', 'Alte Heide', '', ''], [55, '1025', 'Altenbekener<br>Damm', '', ''], [55, '1235', 'Alter Flughafen', '192.168.6.200', '26.08.2024,<br>14:35'],
    [73, '2301', 'Hauptbahnhof<br>Ernst-August-<br>Platz', '192.168.39.77', ''], [55, '2400', 'Ahlem', '', ''], [55, '6575', '', '', '17.10.2024,<br>10:55'],
    [93, '9090', 'Anderten', '', ''], [55, '9091', '', '', ''], [55, '108302', 'Kröpcke', '192.168.6.200', '07.08.2024,<br>14:35'],
    [55, '108401', 'Markthalle/Lan<br>dtag', '192.168.6.201', '']
  ];
  document.getElementById('rows').innerHTML = rows.map(([h, id, stop, ip, date], i) => `
    <div class="grid grid-cols-[128px_128px_255px_128px_189px_89px_128px_127px_128px_155px_24px_24px] items-center pl-4 text-[14px] leading-5 whitespace-nowrap text-[#0c0c0e] shadow-[inset_0_-2px_#707074] ${i % 2 ? '' : 'bg-[#808080]'}" style="height:${h}px">
      <span>${id}</span><span>${stop}</span>
      <span>${i === 9 ? 'Kröpcke /<br>Bahnsteig' : ''}</span><span>${i === 9 ? 'ST' : ''}</span>
      ${i === 9 ? '<span class="flex h-9 w-[130px] items-center rounded-[4px] border border-[#58585c] pl-[34px] text-[15px] text-[#3a3a3d]"><svg class="mr-[12px] h-[14px] w-[17px]" viewBox="0 0 17 14"><path d="M1 7l5 5L16 1" fill="none" stroke="#123f18" stroke-width="3.500"/></svg>Aktiv</span><span class="block h-[17px] w-[17px] rounded-[2px] border border-[#505054]"></span>' : '<span></span><span></span>'}
      <span>${i === 9 ? id : ''}</span><span ${ip ? 'data-w="88"' : ''}>${ip}</span><span>Üstra</span><span>${date}</span>
      <svg class="h-6 w-6 fill-[#1a3463]"><use href="#edit"/></svg><svg class="ml-4 h-6 w-6 fill-[#7c1c20]"><use href="#delete"/></svg>
    </div>`).join('');

  function fitLabels() {
    document.querySelectorAll('[data-w]').forEach(el => {
      el.style.letterSpacing = '0px';
      el.style.whiteSpace = 'nowrap';
      const range = document.createRange();
      range.selectNodeContents(el);
      const delta = el.dataset.w - range.getBoundingClientRect().width;
      el.style.letterSpacing = (delta / el.textContent.length).toFixed(3) + 'px';
    });
  }
  fitLabels();
  document.fonts.ready.then(fitLabels);
  window.addEventListener('load', () => { fitLabels(); requestAnimationFrame(fitLabels); });
  new ResizeObserver(fitLabels).observe(document.querySelector('aside'));
</script>
</body>
</html>
